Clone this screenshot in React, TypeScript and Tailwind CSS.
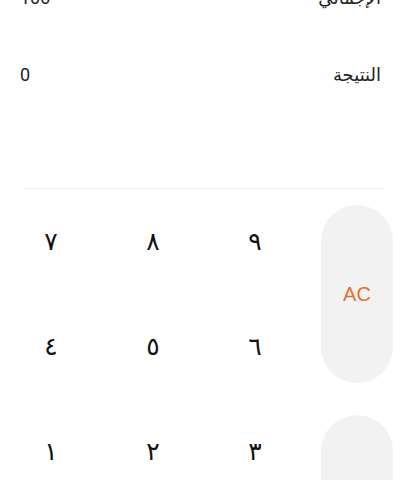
const rows: string[][] = [
  ['٧', '٨', '٩'],
  ['٤', '٥', '٦'],
  ['١', '٢', '٣'],
  ['٠', '.', '⌫'],
];

function Digit({ label }: { label: string }) {
  return (
    <button className="h-[105px] flex items-center justify-center text-[25px] text-[#111] font-['DejaVu_Sans_ExtraLight','DejaVu_Sans',sans-serif]">
      {label}
    </button>
  );
}

export default function App() {
  return (
    <div dir="rtl" className="w-[408px] h-[480px] overflow-hidden bg-white font-['DejaVu_Sans',sans-serif]">
      <div className="-mt-[41px] h-[229px] pl-5 pr-[27px]">
        <div className="h-[77px] flex items-center justify-between text-[18px] text-[#222]">
          <span>الإجمالي</span>
          <span className="font-['Roboto',sans-serif]">100</span>
        </div>
        <div className="h-[77px] flex items-center justify-between text-[18px] text-[#222]">
          <span>النتيجة</span>
          <span className="font-['Roboto',sans-serif]">0</span>
        </div>
      </div>
      <div className="mx-6 border-t border-[#eeeeee]" />
      <div dir="ltr" className="grid grid-cols-4">
        <div className="col-span-3 grid grid-cols-3">
          {rows.map((r) => r.map((d) => <Digit key={d} label={d} />))}
        </div>
        <div className="flex flex-col">
          <div className="h-[210px] px-[15px] py-4">
            <button className="w-full h-full rounded-full bg-[#f2f2f2] text-[20px] text-[#e4702f] font-['Liberation_Sans',sans-serif]">
              AC
            </button>
          </div>
          <div className="h-[210px] px-[15px] py-4">
            <button className="w-full h-full rounded-full bg-[#f2f2f2] text-[24px] text-[#e4702f] font-['Liberation_Sans',sans-serif]">
              =
            </button>
          </div>
        </div>
      </div>
    </div>
  );
}
